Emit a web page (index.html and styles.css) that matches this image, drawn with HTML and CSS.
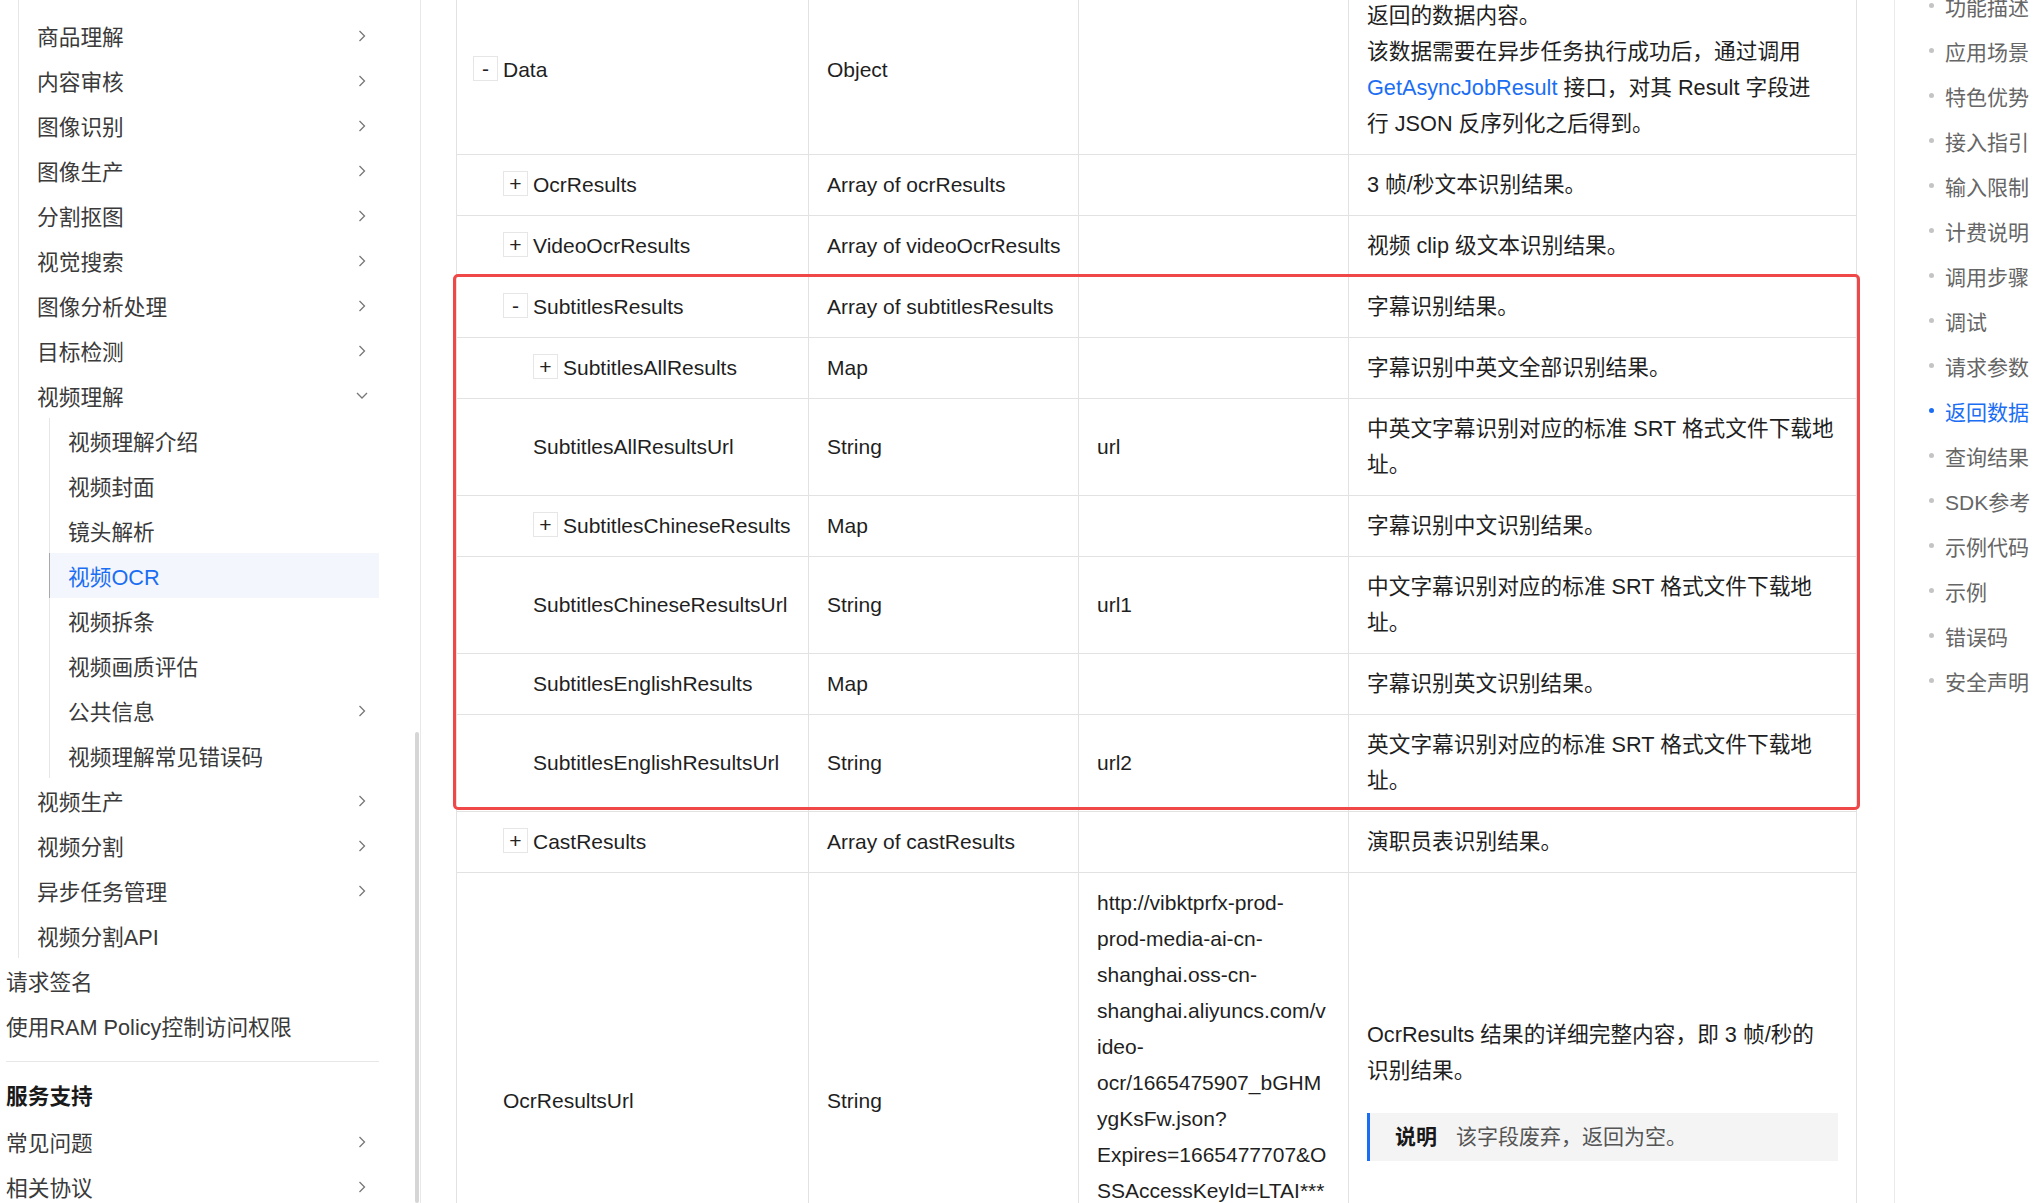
FILE: index.html
```html
<!DOCTYPE html>
<html lang="zh-CN">
<head>
    <meta charset="UTF-8">
    <meta name="viewport" content="width=device-width, initial-scale=1.0">
    <title>视频 OCR - 返回数据</title>
    <link rel="stylesheet" href="styles.css">
</head>
<body>
<div class="page">
    <!-- left navigation tree -->
    <aside class="sidebar">
        <ul class="tree lvl1">
            <li><a class="item" href="#">商品理解<svg class="chev" viewBox="0 0 8 12"><polyline points="1.5,1 6.5,6 1.5,11"/></svg></a></li>
            <li><a class="item" href="#">内容审核<svg class="chev" viewBox="0 0 8 12"><polyline points="1.5,1 6.5,6 1.5,11"/></svg></a></li>
            <li><a class="item" href="#">图像识别<svg class="chev" viewBox="0 0 8 12"><polyline points="1.5,1 6.5,6 1.5,11"/></svg></a></li>
            <li><a class="item" href="#">图像生产<svg class="chev" viewBox="0 0 8 12"><polyline points="1.5,1 6.5,6 1.5,11"/></svg></a></li>
            <li><a class="item" href="#">分割抠图<svg class="chev" viewBox="0 0 8 12"><polyline points="1.5,1 6.5,6 1.5,11"/></svg></a></li>
            <li><a class="item" href="#">视觉搜索<svg class="chev" viewBox="0 0 8 12"><polyline points="1.5,1 6.5,6 1.5,11"/></svg></a></li>
            <li><a class="item" href="#">图像分析处理<svg class="chev" viewBox="0 0 8 12"><polyline points="1.5,1 6.5,6 1.5,11"/></svg></a></li>
            <li><a class="item" href="#">目标检测<svg class="chev" viewBox="0 0 8 12"><polyline points="1.5,1 6.5,6 1.5,11"/></svg></a></li>
            <li>
                <a class="item" href="#">视频理解<svg class="chev-down" viewBox="0 0 12 7"><polyline points="1,1 6,6 11,1"/></svg></a>
                <ul class="tree lvl2">
                    <li><a class="item" href="#">视频理解介绍</a></li>
                    <li><a class="item" href="#">视频封面</a></li>
                    <li><a class="item" href="#">镜头解析</a></li>
                    <li><a class="item active" href="#">视频OCR</a></li>
                    <li><a class="item" href="#">视频拆条</a></li>
                    <li><a class="item" href="#">视频画质评估</a></li>
                    <li><a class="item" href="#">公共信息<svg class="chev" viewBox="0 0 8 12"><polyline points="1.5,1 6.5,6 1.5,11"/></svg></a></li>
                    <li><a class="item" href="#">视频理解常见错误码</a></li>
                </ul>
            </li>
            <li><a class="item" href="#">视频生产<svg class="chev" viewBox="0 0 8 12"><polyline points="1.5,1 6.5,6 1.5,11"/></svg></a></li>
            <li><a class="item" href="#">视频分割<svg class="chev" viewBox="0 0 8 12"><polyline points="1.5,1 6.5,6 1.5,11"/></svg></a></li>
            <li><a class="item" href="#">异步任务管理<svg class="chev" viewBox="0 0 8 12"><polyline points="1.5,1 6.5,6 1.5,11"/></svg></a></li>
            <li><a class="item" href="#">视频分割API</a></li>
        </ul>
        <ul class="tree top">
            <li><a class="item" href="#">请求签名</a></li>
            <li><a class="item" href="#">使用RAM Policy控制访问权限</a></li>
        </ul>
        <div class="divider"></div>
        <div class="group-title">服务支持</div>
        <ul class="tree top">
            <li><a class="item" href="#">常见问题<svg class="chev" viewBox="0 0 8 12"><polyline points="1.5,1 6.5,6 1.5,11"/></svg></a></li>
            <li><a class="item" href="#">相关协议<svg class="chev" viewBox="0 0 8 12"><polyline points="1.5,1 6.5,6 1.5,11"/></svg></a></li>
        </ul>
        <div class="scroll-thumb"></div>
    </aside>

    <!-- response parameters table -->
    <main class="main">
        <div class="table-wrap">
            <table class="params">
                <colgroup>
                    <col class="c-name">
                    <col class="c-type">
                    <col class="c-example">
                    <col class="c-desc">
                </colgroup>
                <tbody>
                    <tr>
                        <td class="l0"><span class="toggle">-</span>Data</td>
                        <td>Object</td>
                        <td></td>
                        <td class="desc">返回的数据内容。<br>该数据需要在异步任务执行成功后，通过调用<br><a class="link" href="#">GetAsyncJobResult</a> 接口，对其 Result 字段进<br>行 JSON 反序列化之后得到。</td>
                    </tr>
                    <tr>
                        <td class="l1"><span class="toggle">+</span>OcrResults</td>
                        <td>Array of ocrResults</td>
                        <td></td>
                        <td class="desc">3 帧/秒文本识别结果。</td>
                    </tr>
                    <tr>
                        <td class="l1"><span class="toggle">+</span>VideoOcrResults</td>
                        <td>Array of videoOcrResults</td>
                        <td></td>
                        <td class="desc">视频 clip 级文本识别结果。</td>
                    </tr>
                    <tr>
                        <td class="l1"><span class="toggle">-</span>SubtitlesResults</td>
                        <td>Array of subtitlesResults</td>
                        <td></td>
                        <td class="desc">字幕识别结果。</td>
                    </tr>
                    <tr>
                        <td class="l2"><span class="toggle">+</span>SubtitlesAllResults</td>
                        <td>Map</td>
                        <td></td>
                        <td class="desc">字幕识别中英文全部识别结果。</td>
                    </tr>
                    <tr>
                        <td class="l2">SubtitlesAllResultsUrl</td>
                        <td>String</td>
                        <td>url</td>
                        <td class="desc">中英文字幕识别对应的标准 SRT 格式文件下载地<br>址。</td>
                    </tr>
                    <tr>
                        <td class="l2"><span class="toggle">+</span>SubtitlesChineseResults</td>
                        <td>Map</td>
                        <td></td>
                        <td class="desc">字幕识别中文识别结果。</td>
                    </tr>
                    <tr>
                        <td class="l2">SubtitlesChineseResultsUrl</td>
                        <td>String</td>
                        <td>url1</td>
                        <td class="desc">中文字幕识别对应的标准 SRT 格式文件下载地<br>址。</td>
                    </tr>
                    <tr>
                        <td class="l2">SubtitlesEnglishResults</td>
                        <td>Map</td>
                        <td></td>
                        <td class="desc">字幕识别英文识别结果。</td>
                    </tr>
                    <tr>
                        <td class="l2">SubtitlesEnglishResultsUrl</td>
                        <td>String</td>
                        <td>url2</td>
                        <td class="desc">英文字幕识别对应的标准 SRT 格式文件下载地<br>址。</td>
                    </tr>
                    <tr>
                        <td class="l1"><span class="toggle">+</span>CastResults</td>
                        <td>Array of castResults</td>
                        <td></td>
                        <td class="desc">演职员表识别结果。</td>
                    </tr>
                    <tr>
                        <td class="l1">OcrResultsUrl</td>
                        <td>String</td>
                        <td>http://vibktprfx-prod-<br>prod-media-ai-cn-<br>shanghai.oss-cn-<br>shanghai.aliyuncs.com/v<br>ideo-<br>ocr/1665475907_bGHM<br>ygKsFw.json?<br>Expires=1665477707&amp;O<br>SSAccessKeyId=LTAI***<br>**************&amp;Signat<br>ure=****************<br>****</td>
                        <td class="desc">
                            <p class="txt">OcrResults 结果的详细完整内容，即 3 帧/秒的<br>识别结果。</p>
                            <div class="note"><b>说明</b><span>该字段废弃，返回为空。</span></div>
                        </td>
                    </tr>
                </tbody>
            </table>
            <!-- red annotation box over the subtitles rows -->
            <div class="highlight"></div>
        </div>
    </main>

    <!-- on-page table of contents -->
    <nav class="toc">
        <ul>
            <li><span class="dot"></span>功能描述</li>
            <li><span class="dot"></span>应用场景</li>
            <li><span class="dot"></span>特色优势</li>
            <li><span class="dot"></span>接入指引</li>
            <li><span class="dot"></span>输入限制</li>
            <li><span class="dot"></span>计费说明</li>
            <li><span class="dot"></span>调用步骤</li>
            <li><span class="dot"></span>调试</li>
            <li><span class="dot"></span>请求参数</li>
            <li class="current"><span class="dot"></span>返回数据</li>
            <li><span class="dot"></span>查询结果</li>
            <li><span class="dot"></span>SDK参考</li>
            <li><span class="dot"></span>示例代码</li>
            <li><span class="dot"></span>示例</li>
            <li><span class="dot"></span>错误码</li>
            <li><span class="dot"></span>安全声明</li>
        </ul>
    </nav>
</div>
</body>
</html>
```

FILE: styles.css
```css
body {
    margin: 0;
    font-family: "Liberation Sans", "Noto Sans CJK SC", sans-serif;
    color: #333;
    background: #fff;
}
.page {
    display: flex;
    height: 100vh;
    overflow: hidden;
}

/* left navigation */
.sidebar {
    position: relative;
    flex-shrink: 0;
    box-sizing: border-box;
    width: 421px;
    padding: 0 41px 0 6px;
    border-right: 1px solid #e8e8e8;
    font-size: 21.7px;
}
.tree {
    list-style: none;
    margin: 0;
    padding: 0;
}
.tree.lvl1 {
    margin-left: 12px;
    padding-top: 13px;
    border-left: 1px solid #e6e6e6;
}
.tree.lvl2 {
    margin-left: 30px;
    border-left: 1px solid #e6e6e6;
}
.item {
    display: flex;
    align-items: center;
    justify-content: space-between;
    height: 45px;
    padding: 0 13px 0 18px;
    color: #3a3a3a;
    text-decoration: none;
    white-space: nowrap;
}
.tree.top .item {
    padding-left: 0;
}
.item.active {
    margin-left: -1px;
    border-left: 1px solid #a9a9a9;
    background: #f3f6fc;
    color: #1b6ef3;
}
.chev {
    width: 8px;
    height: 12px;
    fill: none;
    stroke: #777;
    stroke-width: 1.3;
}
.chev-down {
    width: 12px;
    height: 7px;
    margin-right: -2px;
    fill: none;
    stroke: #777;
    stroke-width: 1.3;
}
.divider {
    height: 1px;
    margin-top: 13px;
    background: #e8e8e8;
}
.group-title {
    height: 45px;
    line-height: 45px;
    margin-top: 12px;
    font-weight: bold;
    color: #1a1a1a;
}
.scroll-thumb {
    position: absolute;
    top: 732px;
    bottom: 0;
    right: 1px;
    width: 4px;
    border-radius: 2px;
    background: #d6d6d6;
}

/* main content */
.main {
    flex: 1;
    padding: 0 38px 0 35px;
    overflow: hidden;
}
.table-wrap {
    position: relative;
    width: 1400px;
    margin-top: -15px;
}
.params {
    width: 1400px;
    border-collapse: collapse;
    table-layout: fixed;
    font-size: 21px;
    line-height: 36px;
    color: #1f1f1f;
}
.c-name { width: 352px; }
.c-type { width: 270px; }
.c-example { width: 270px; }
.c-desc { width: 508px; }
.params td {
    padding: 12px 18px;
    border: 1px solid #e2e2e2;
    vertical-align: middle;
    white-space: nowrap;
}
.params td.desc {
    font-size: 21.7px;
}
.params td.l0 { padding-left: 16px; }
.params td.l1 { padding-left: 46px; }
.params td.l2 { padding-left: 76px; }
.toggle {
    display: inline-flex;
    align-items: center;
    justify-content: center;
    box-sizing: border-box;
    width: 25px;
    height: 25px;
    margin-right: 5px;
    border: 1px solid #e6e6e6;
    font-size: 21px;
    line-height: 1;
    vertical-align: 1px;
    color: #222;
}
.link {
    color: #1b6ef3;
    text-decoration: none;
}
.txt {
    margin: 0;
}
.note {
    margin: 24px 0;
    padding: 6px 25px;
    border-left: 3px solid #1b6ef3;
    background: #f4f4f4;
    font-size: 21px;
    line-height: 36px;
}
.note b {
    margin-right: 19px;
    color: #181818;
}
.note span {
    color: #555;
}
.highlight {
    position: absolute;
    top: 289px;
    left: -3px;
    width: 1407px;
    height: 536px;
    box-sizing: border-box;
    border: 3px solid #f04848;
    border-radius: 5px;
    pointer-events: none;
}

/* right table of contents */
.toc {
    flex-shrink: 0;
    box-sizing: border-box;
    width: 143px;
    padding-left: 34px;
    border-left: 1px solid #eaeaea;
    font-size: 21px;
    color: #666;
    overflow: hidden;
}
.toc ul {
    list-style: none;
    margin: -17px 0 0;
    padding: 0;
}
.toc li {
    display: flex;
    align-items: center;
    height: 45px;
    white-space: nowrap;
}
.dot {
    flex-shrink: 0;
    width: 5px;
    height: 5px;
    margin-right: 11px;
    border-radius: 50%;
    background: #c4c4c4;
}
.toc li.current {
    color: #1b6ef3;
}
.toc li.current .dot {
    background: #1b6ef3;
}
```
